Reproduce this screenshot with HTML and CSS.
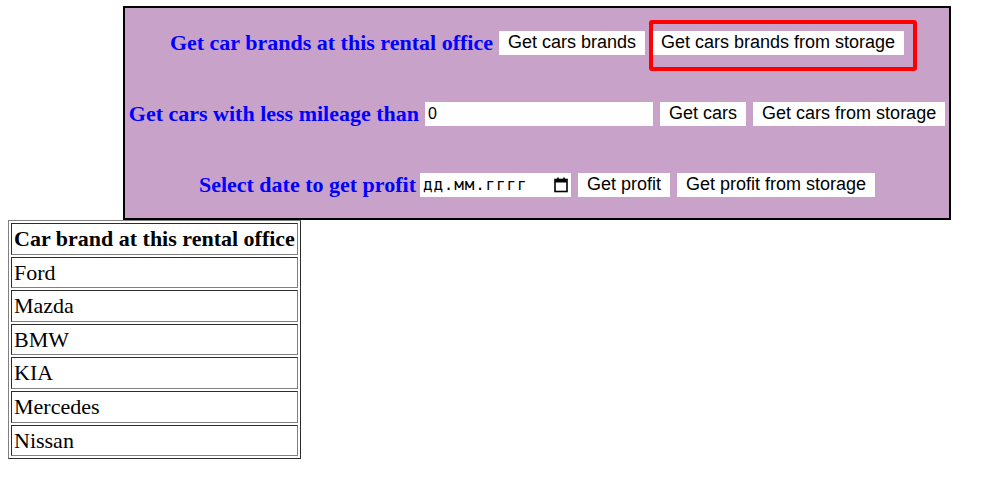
FILE: index.html
```html
<!DOCTYPE html>
<html lang="en">
<head>
<meta charset="utf-8">
<title>Car rental office</title>
<link rel="stylesheet" href="styles.css">
</head>
<body>
<div class="panel">
  <div class="row">
    <span class="label">Get car brands at this rental office</span>
    <button class="btn">Get cars brands</button>
    <span class="mark-wrap"><button class="btn">Get cars brands from storage</button><span class="mark"></span></span>
  </div>
  <div class="row">
    <span class="label">Get cars with less mileage than</span>
    <input class="num-input" type="text" value="0">
    <button class="btn">Get cars</button>
    <button class="btn">Get cars from storage</button>
  </div>
  <div class="row">
    <span class="label">Select date to get profit</span>
    <span class="date-input"><span class="date-text">дд.мм.гггг</span><svg class="cal" width="14" height="16" viewBox="0 0 14 16"><rect x="1" y="2.5" width="12" height="12" fill="none" stroke="#000" stroke-width="1.6"/><rect x="1" y="2.5" width="12" height="3" fill="#000"/><rect x="3.2" y="0.5" width="1.6" height="3" fill="#000"/><rect x="9.2" y="0.5" width="1.6" height="3" fill="#000"/></svg></span>
    <button class="btn">Get profit</button>
    <button class="btn">Get profit from storage</button>
  </div>
</div>
<table class="brands">
  <tr><th>Car brand at this rental office</th></tr>
  <tr><td>Ford</td></tr>
  <tr><td>Mazda</td></tr>
  <tr><td>BMW</td></tr>
  <tr><td>KIA</td></tr>
  <tr><td>Mercedes</td></tr>
  <tr><td>Nissan</td></tr>
</table>
</body>
</html>
```
FILE: styles.css
```css
html, body {
  background: #fff;
}
body {
  margin: 6px 8px 0;
  font-family: "Liberation Serif", "Times New Roman", serif;
  color: #000;
}
.panel {
  margin-left: 115px;
  width: 828px;
  height: 214px;
  box-sizing: border-box;
  border: 2px solid #000;
  background: #c8a2c8;
  display: flex;
  flex-direction: column;
  padding-top: 0;
}
.row {
  flex: 0 0 71px;
  height: 71px;
  display: flex;
  align-items: center;
  justify-content: center;
  gap: 7px;
  padding-left: 2px;
}
.row:first-child {
  margin-top: -1px;
}
.label {
  color: #0000ff;
  font-weight: bold;
  font-size: 22px;
  margin-right: -1px;
  margin-left: -2px;
}
.btn {
  font-family: "Liberation Sans", Arial, sans-serif;
  font-size: 18px;
  line-height: 21px;
  height: 24px;
  padding: 1px 9px;
  border: none;
  background: #fff;
  color: #000;
  margin: 0;
}
.mark-wrap {
  position: relative;
  display: inline-flex;
}
.mark {
  position: absolute;
  left: -3px;
  top: -11px;
  width: 268px;
  height: 51px;
  box-sizing: border-box;
  border: 4px solid #ff0000;
  border-radius: 3px;
  pointer-events: none;
}
.num-input {
  width: 228px;
  height: 24px;
  box-sizing: border-box;
  border: none;
  padding: 1px 3px;
  margin: 0;
  font-family: "Liberation Sans", Arial, sans-serif;
  font-size: 16px;
  background: #fff;
  color: #000;
}
.date-input {
  width: 151px;
  height: 24px;
  box-sizing: border-box;
  background: #fff;
  display: inline-flex;
  align-items: center;
  justify-content: space-between;
  padding: 0 3px 0 3px;
  margin-left: -2px;
}
.date-text {
  font-family: "DejaVu Sans Mono", monospace;
  font-size: 16px;
  letter-spacing: 0.8px;
}
.cal {
  display: block;
}
.brands {
  border: 1px outset #808080;
  border-spacing: 2px;
  font-size: 22px;
  line-height: 25.6px;
}
.brands th,
.brands td {
  border: 1px inset #808080;
  padding: 2px;
  text-align: left;
}
```
